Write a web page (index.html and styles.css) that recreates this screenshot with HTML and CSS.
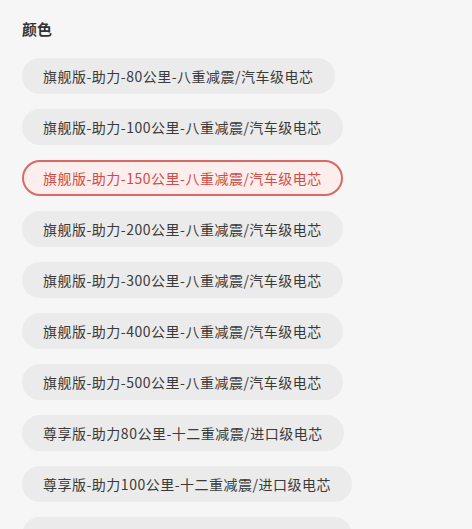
FILE: index.html
```html
<!DOCTYPE html>
<html lang="zh-CN">
<head>
  <meta charset="UTF-8">
  <meta name="viewport" content="width=device-width, initial-scale=1.0">
  <title>颜色</title>
  <link rel="stylesheet" href="styles.css">
</head>
<body>
  <div class="sku-panel">
    <h3 class="sku-title">颜色</h3>

    <!-- Option list -->
    <div class="sku-options">
      <span class="sku-option">旗舰版-助力-80公里-八重减震/汽车级电芯</span>
      <span class="sku-option">旗舰版-助力-100公里-八重减震/汽车级电芯</span>
      <span class="sku-option selected">旗舰版-助力-150公里-八重减震/汽车级电芯</span>
      <span class="sku-option">旗舰版-助力-200公里-八重减震/汽车级电芯</span>
      <span class="sku-option">旗舰版-助力-300公里-八重减震/汽车级电芯</span>
      <span class="sku-option">旗舰版-助力-400公里-八重减震/汽车级电芯</span>
      <span class="sku-option">旗舰版-助力-500公里-八重减震/汽车级电芯</span>
      <span class="sku-option">尊享版-助力80公里-十二重减震/进口级电芯</span>
      <span class="sku-option">尊享版-助力100公里-十二重减震/进口级电芯</span>
      <span class="sku-option">尊享版-助力150公里-十二重减震/进口级电芯</span>
    </div>
  </div>
</body>
</html>
```

FILE: styles.css
```css
/* Page */
body {
  margin: 0;
  padding: 0;
  background-color: #f6f6f6;
  font-family: "Noto Sans CJK SC", "Noto Sans", sans-serif;
  color: #333333;
}

.sku-panel {
  padding: 18px 22px 0;
}

.sku-title {
  margin: 0 0 18px;
  font-size: 15px;
  font-weight: bold;
  line-height: 22px;
  color: #333333;
}

/* Option pills */
.sku-options {
  display: flex;
  flex-direction: column;
  align-items: flex-start;
  gap: 15px;
}

.sku-option {
  display: inline-block;
  height: 36px;
  line-height: 36px;
  padding: 0 21px;
  border-radius: 18px;
  background-color: #ebebeb;
  font-size: 14px;
  letter-spacing: 0.5px;
  color: #3a3a3a;
  white-space: nowrap;
  box-sizing: border-box;
}

.sku-option.selected {
  background-color: #fbeeed;
  color: #cf4d47;
  border: 2px solid #d86a63;
  line-height: 32px;
  padding: 0 19px;
}
```
